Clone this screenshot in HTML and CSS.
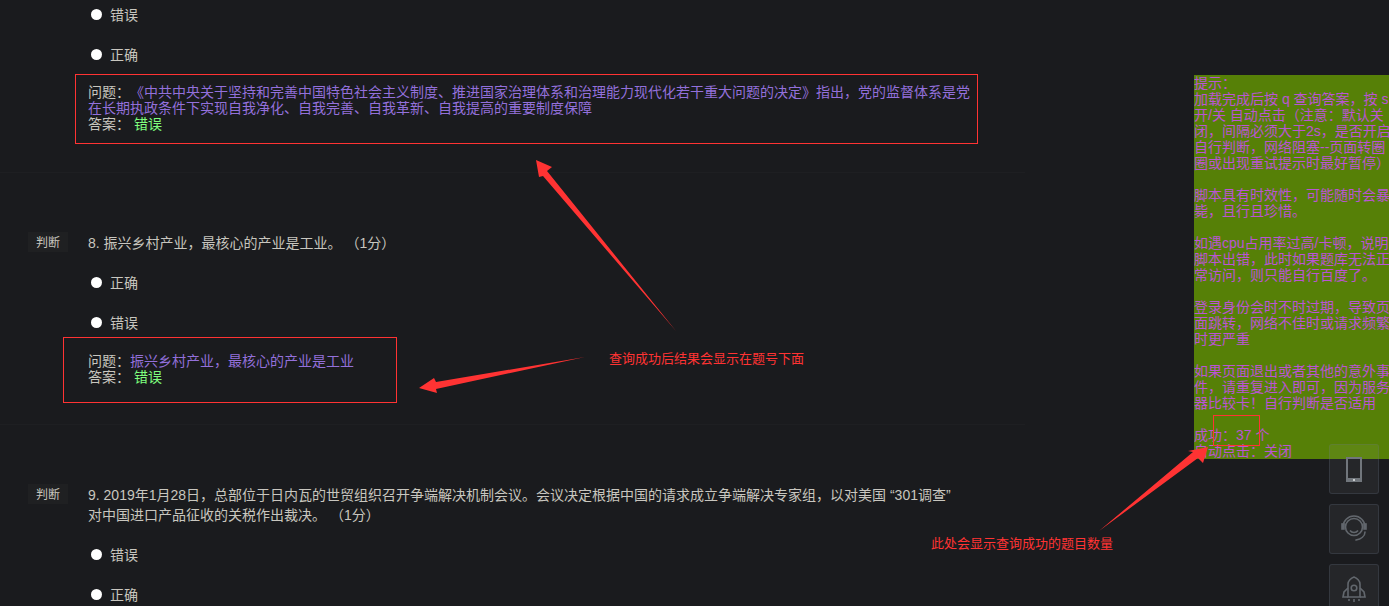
FILE: index.html
```html
<!DOCTYPE html>
<html lang="zh-CN">
<head>
  <meta charset="UTF-8">
  <meta name="viewport" content="width=device-width, initial-scale=1">
  <title>查询答案</title>
  <link rel="stylesheet" href="styles.css">
</head>
<body>

<main class="paper">
  <section class="question question-first">
    <div class="option"><span class="radio"></span>错误</div>
    <div class="option"><span class="radio"></span>正确</div>
    <div class="answer answer-wide">
      问题：<span class="ask">《中共中央关于坚持和完善中国特色社会主义制度、推进国家治理体系和治理能力现代化若干重大问题的决定》指出，党的监督体系是党在长期执政条件下实现自我净化、自我完善、自我革新、自我提高的重要制度保障</span><br>
      答案： <span class="result">错误</span>
    </div>
  </section>

  <section class="question">
    <div class="stem">
      <span class="tag">判断</span>
      <p class="title">8. 振兴乡村产业，最核心的产业是工业。 （1分）</p>
    </div>
    <div class="option"><span class="radio"></span>正确</div>
    <div class="option"><span class="radio"></span>错误</div>
    <div class="answer answer-short">
      问题：<span class="ask">振兴乡村产业，最核心的产业是工业</span><br>
      答案： <span class="result">错误</span>
    </div>
  </section>

  <section class="question question-last">
    <div class="stem">
      <span class="tag">判断</span>
      <p class="title">9. 2019年1月28日，总部位于日内瓦的世贸组织召开争端解决机制会议。会议决定根据中国的请求成立争端解决专家组，以对美国 “301调查” 对中国进口产品征收的关税作出裁决。 （1分）</p>
    </div>
    <div class="option"><span class="radio"></span>错误</div>
    <div class="option"><span class="radio"></span>正确</div>
  </section>
</main>

<aside class="tips">提示：
加载完成后按 q 查询答案，按 s
开/关 自动点击（注意：默认关
闭，间隔必须大于2s，是否开启
自行判断，网络阻塞--页面转圈
圈或出现重试提示时最好暂停）

脚本具有时效性，可能随时会暴
毙，且行且珍惜。

如遇cpu占用率过高/卡顿，说明
脚本出错，此时如果题库无法正
常访问，则只能自行百度了。

登录身份会时不时过期，导致页
面跳转，网络不佳时或请求频繁
时更严重

如果页面退出或者其他的意外事
件，请重复进入即可，因为服务
器比较卡！自行判断是否适用

成功：37 个
自动点击：关闭</aside>

<div class="side-tools">
  <a class="tool">
    <svg viewBox="0 0 48 48" width="48" height="48">
      <rect x="17" y="13" width="14" height="23" fill="none" stroke="#71767c" stroke-width="2"/>
      <rect x="16" y="33" width="16" height="4" fill="#71767c"/>
      <rect x="23" y="34" width="2" height="2" fill="#c9ccce"/>
    </svg>
  </a>
  <a class="tool">
    <svg viewBox="0 0 48 48" width="48" height="48" fill="none" stroke="#62676d" stroke-width="1.6">
      <circle cx="24" cy="22" r="8.5"/>
      <path d="M13 22a11 11 0 0 1 22 0"/>
      <path d="M20 25.5a5 5 0 0 0 8 0"/>
      <path d="M35 27c0 4-4 7-9 8" stroke-linecap="round"/>
      <rect x="12" y="19" width="2" height="5" fill="#62676d"/>
      <rect x="34" y="19" width="2" height="5" fill="#62676d"/>
    </svg>
  </a>
  <a class="tool">
    <svg viewBox="0 0 48 48" width="48" height="48" fill="none" stroke="#62676d" stroke-width="1.6">
      <path d="M18 32V19c0-3 3-6 6-7 3 1 6 4 6 7v13z"/>
      <circle cx="24" cy="23" r="2.8"/>
      <path d="M18 23l-4 4-1 5h5M30 23l4 4 1 5h-5"/>
      <path d="M19 34v2M24 34v3M29 34v2"/>
    </svg>
  </a>
</div>

<svg class="marks" width="1389" height="606" viewBox="0 0 1389 606">
  <rect x="1213.5" y="415.5" width="46" height="30" fill="none" stroke="#ff3333"/>
  <polygon fill="#ff3333" points="536,160 552,167 547,171 676,331 543,176 539,177"/>
  <polygon fill="#ff3333" points="419,388 434,378 436,382 585,357 436,389 437,393"/>
  <polygon fill="#ff3333" points="1208,447 1203,463 1198,458 1099,531 1193,452 1188,451"/>
</svg>
<span class="note note-result">查询成功后结果会显示在题号下面</span>
<span class="note note-count">此处会显示查询成功的题目数量</span>

</body>
</html>
```

FILE: styles.css
```css
* {
  box-sizing: border-box;
}

html, body {
  height: 606px;
}

body {
  margin: 0;
  overflow: hidden;
  position: relative;
  background-color: #1a1b1e;
  color: #c8c6bf;
  font-family: "Liberation Sans", "Noto Sans CJK SC", sans-serif;
  font-size: 14px;
  text-spacing-trim: space-all;
}

.paper {
  width: 1025px;
}

.question {
  padding-top: 60px;
  padding-bottom: 21px;
  border-bottom: 1px solid #1e1f22;
}

.question-first {
  padding-top: 4px;
  padding-bottom: 28px;
}

.question-last {
  border-bottom: none;
}

.stem {
  display: flex;
  align-items: flex-start;
  gap: 20px;
  padding-left: 28px;
}

.tag {
  flex: none;
  width: 40px;
  height: 20px;
  margin-top: -1px;
  background-color: #1f2022;
  font-size: 12px;
  line-height: 23px;
  text-align: center;
}

.title {
  width: 872px;
  margin: 0;
  line-height: 20px;
}

.option {
  display: flex;
  align-items: center;
  gap: 8px;
  height: 20px;
  margin-top: 20px;
  margin-left: 91px;
}

.stem + .option {
  margin-top: 19px;
}

.question-first .option:first-child {
  margin-top: 0;
}

.radio {
  width: 11px;
  height: 11px;
  border-radius: 50%;
  background-color: #fff;
}

.answer {
  border: 1px solid #ff3333;
  line-height: 16px;
}

.answer-wide {
  width: 903px;
  margin: 10px 0 0 75px;
  padding: 9px 6px 11px 12px;
}

.answer-short {
  width: 334px;
  margin: 5px 0 0 63px;
  padding: 15px 12px 17px 24px;
}

.ask {
  color: #9370db;
}

.result {
  color: #7fff7f;
}

.tips {
  position: absolute;
  top: 75px;
  left: 1194px;
  width: 195px;
  height: 384px;
  overflow: hidden;
  background-color: #568007;
  color: #ba55d3;
  line-height: 16px;
  white-space: pre;
}

.side-tools {
  position: absolute;
  top: 444px;
  left: 1329px;
  display: flex;
  flex-direction: column;
  gap: 10px;
}

.tool {
  display: block;
  flex: none;
  width: 50px;
  height: 50px;
  border: 1px solid rgba(100, 110, 130, 0.25);
  border-radius: 3px;
  background-color: rgba(255, 255, 255, 0.05);
}

.tool svg {
  display: block;
}

.marks {
  position: absolute;
  top: 0;
  left: 0;
  pointer-events: none;
}

.note {
  position: absolute;
  color: #ff3333;
  font-size: 13px;
  line-height: 16px;
  white-space: nowrap;
}

.note-result {
  top: 351px;
  left: 609px;
}

.note-count {
  top: 536px;
  left: 931px;
}
```
